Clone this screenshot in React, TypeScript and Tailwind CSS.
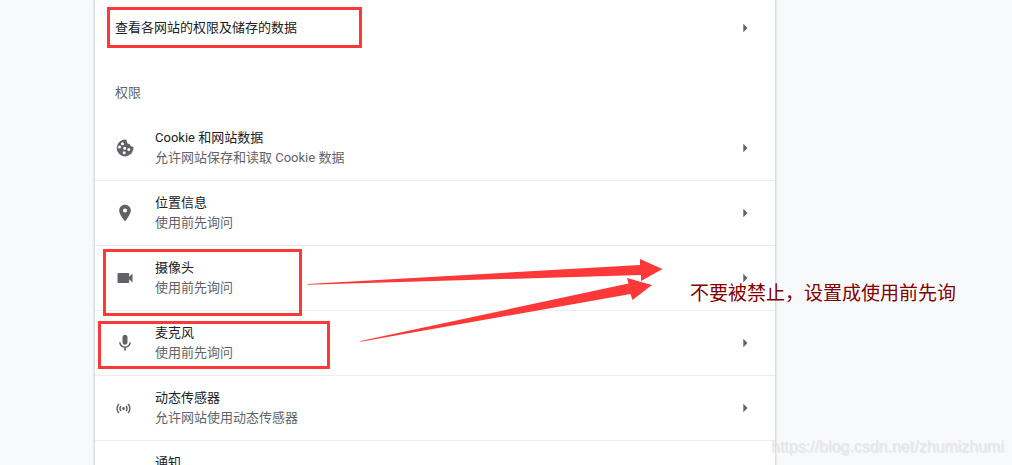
import { MdArrowRight, MdLocationOn, MdMic, MdNotifications, MdSensors, MdVideocam } from 'react-icons/md';
import type { ReactNode } from 'react';

function CookieIcon() {
  return (
    <svg viewBox="0 0 20 20" className="size-5" fill="currentColor" aria-hidden="true">
      <path
        fillRule="evenodd"
        d="M11.4 1.7A8.4 8.4 0 1 0 18.400 8.700L15.800 8.300 14.800 6.200 12.500 5.500 11.800 3.500zM7.500 4.200a1.500 1.500 0 1 1 0 3 1.500 1.500 0 0 1 0-3zM4.500 7.500a1.500 1.500 0 1 1 0 3 1.500 1.500 0 0 1 0-3zM9.700 8.700a1.500 1.500 0 1 1 0 3 1.500 1.500 0 0 1 0-3zM13.800 10.100a1.500 1.500 0 1 1 0 3 1.500 1.500 0 0 1 0-3zM9.200 13.300a1.500 1.500 0 1 1 0 3 1.500 1.500 0 0 1 0-3z"
      />
    </svg>
  );
}

const permissions: { title: string; status: string; icon: ReactNode }[] = [
  { title: 'Cookie 和网站数据', status: '允许网站保存和读取 Cookie 数据', icon: <CookieIcon /> },
  { title: '位置信息', status: '使用前先询问', icon: <MdLocationOn size={20} /> },
  { title: '摄像头', status: '使用前先询问', icon: <MdVideocam size={20} /> },
  { title: '麦克风', status: '使用前先询问', icon: <MdMic size={20} /> },
  { title: '动态传感器', status: '允许网站使用动态传感器', icon: <MdSensors size={17} /> },
  { title: '通知', status: '使用前先询问', icon: <MdNotifications size={20} /> },
];

export default function App() {
  return (
    <div className="relative h-screen overflow-hidden bg-[#f8f9fb] pl-[95px] font-['Roboto','Noto_Sans_CJK_SC',sans-serif] text-[13px] leading-5 text-[#202124]">
      <main className="w-full max-w-[680px] bg-white shadow-[0_0_2px_1px_rgba(60,64,67,0.22)]">
        <button className="flex h-14 w-full items-center justify-between px-5 text-left">
          <span>查看各网站的权限及储存的数据</span>
          <MdArrowRight size={20} className="text-[#5f6368]" />
        </button>

        <h2 className="flex h-15 items-center px-5 pt-3.5 text-[#5f6368]">权限</h2>

        <ul className="divide-y divide-[#ebecee]">
          {permissions.map((item) => (
            <li key={item.title}>
              <button className="flex h-16 w-full items-center gap-5 px-5 text-left">
                <span className="w-5 shrink-0 text-[#5f6368]">{item.icon}</span>
                <span className="flex-1">
                  <span className="block">{item.title}</span>
                  <span className="block text-[#5f6368]">{item.status}</span>
                </span>
                <MdArrowRight size={20} className="text-[#5f6368]" />
              </button>
            </li>
          ))}
        </ul>
      </main>

      {/* Annotations */}
      <div className="pointer-events-none absolute inset-0">
        <div className="absolute top-[7px] left-[107px] h-[41px] w-[255px] border-3 border-[#fc3838]" />
        <div className="absolute top-[249px] left-[103px] h-[67px] w-[199px] border-3 border-[#fc3838]" />
        <div className="absolute top-[321px] left-[98px] h-[48px] w-[232px] border-3 border-[#fc3838]" />
        <svg
          viewBox="0 0 380 100"
          className="absolute top-[250px] left-[300px] h-[100px] w-[380px]"
          fill="#fc3838"
          aria-hidden="true"
        >
          <path d="M7.500 34 340 15V9l22.500 10L341 31v-6L7.500 34.800z" />
          <path d="M60.500 91 328.500 33.500 327 28l25 7-19.500 15-2-6L60.500 91.800z" />
        </svg>
        <p className="absolute top-[280px] left-[690px] text-[19px] leading-7 whitespace-nowrap text-[#800000]">
          不要被禁止，设置成使用前先询
        </p>
        <p className="absolute right-2 bottom-2 font-['Liberation_Sans',sans-serif] text-base leading-5 text-[#e6e7e9] [text-shadow:1px_1px_1px_rgba(0,0,0,0.08)]">
          https://blog.csdn.net/zhumizhumi
        </p>
      </div>
    </div>
  );
}
